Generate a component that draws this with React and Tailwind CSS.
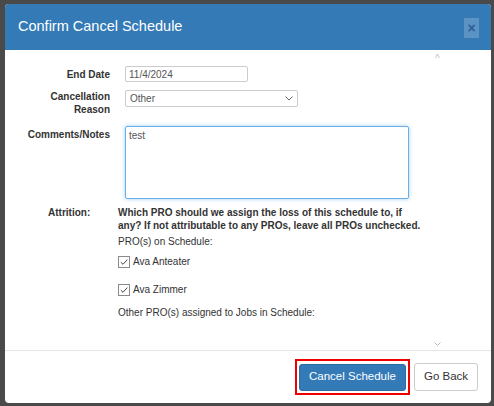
import React from 'react';

const Check = () => (
  <span className="flex h-[12px] w-[12px] items-center justify-center border border-[#8a8a8a] bg-white">
    <svg width="10" height="10" viewBox="0 0 10 10" fill="none">
      <path d="M1.8 5.2 L4 7.3 L8.3 2.6" stroke="#444" strokeWidth="1" />
    </svg>
  </span>
);

const App = () => {
  return (
    <div className="h-[406px] w-[494px] bg-[#4a4a4a] pt-[4px] pl-[5px] font-['Liberation_Sans',Arial,sans-serif]">
      <div className="flex h-[399px] w-[486px] flex-col overflow-hidden rounded-[4px] bg-white">
        {/* header */}
        <div className="flex h-[46px] items-center justify-between bg-[#337ab7] pl-[13px] pr-[12px]">
          <h1 className="text-[14.5px] text-white">Confirm Cancel Schedule</h1>
          <button className="mt-[2px] flex h-[20px] w-[15px] items-center justify-center bg-[#5b93c5] text-[14px] font-bold leading-none text-[#2a5f91]">
            ×
          </button>
        </div>

        {/* body */}
        <div className="relative flex-1 text-[10px] text-[#333]">
          <span className="absolute left-[430px] top-[1px] text-[10px] text-[#bbb]">^</span>
          <div className="flex flex-col pt-[16px]">
            <div className="flex items-center">
              <label className="w-[105px] text-right font-bold">End Date</label>
              <input
                readOnly
                value="11/4/2024"
                className="ml-[15px] h-[16px] w-[123px] rounded-[2px] border border-[#ccc] px-[3px] text-[10px] text-[#555] outline-none"
              />
            </div>
            <div className="mt-[8px] flex items-start">
              <label className="w-[105px] text-right font-bold leading-[13px]">
                Cancellation
                <br />
                Reason
              </label>
              <div className="ml-[15px] flex h-[17px] w-[173px] items-center justify-between rounded-[2px] border border-[#ccc] px-[4px] text-[#555]">
                <span>Other</span>
                <svg width="8" height="5" viewBox="0 0 8 5" fill="none">
                  <path d="M0.5 0.5 L4 4 L7.5 0.5" stroke="#666" strokeWidth="1" />
                </svg>
              </div>
            </div>
            <div className="mt-[10px] flex items-start">
              <label className="mt-[1px] w-[105px] text-right font-bold">Comments/Notes</label>
              <div className="ml-[15px] h-[73px] w-[284px] rounded-[2px] border border-[#66afe9] px-[3px] pt-[1px] text-[#555] shadow-[0_0_4px_rgba(102,175,233,0.6)]">
                test
              </div>
            </div>
            <div className="mt-[7px] flex items-start">
              <label className="w-[113px] pl-[43px] font-bold leading-[13px]">Attrition:</label>
              <div className="flex w-[310px] flex-col">
                <p className="whitespace-nowrap font-bold leading-[13px]">
                  Which PRO should we assign the loss of this schedule to, if
                  <br />
                  any? If not attributable to any PROs, leave all PROs unchecked.
                </p>
                <p className="mt-[4px] leading-[12px]">PRO(s) on Schedule:</p>
                <div className="mt-[6px] flex items-center gap-[3px]">
                  <Check />
                  <span>Ava Anteater</span>
                </div>
                <div className="mt-[13px] flex items-center gap-[3px]">
                  <Check />
                  <span>Ava Zimmer</span>
                </div>
                <p className="mt-[10px] leading-[12px]">Other PRO(s) assigned to Jobs in Schedule:</p>
              </div>
            </div>
          </div>
          <svg className="absolute left-[429px] bottom-[3px]" width="7" height="5" viewBox="0 0 7 5" fill="none">
            <path d="M0.5 0.5 L3.5 3.5 L6.5 0.5" stroke="#bbb" strokeWidth="1" />
          </svg>
        </div>

        {/* footer */}
        <div className="flex h-[53px] items-center justify-end gap-[4px] border-t border-[#e5e5e5] pr-[13px]">
          <div className="border-2 border-[#e00] p-[2px]">
            <button className="h-[27px] w-[107px] rounded-[3px] border border-[#2e6da4] bg-[#337ab7] text-[11.5px] text-white">
              Cancel Schedule
            </button>
          </div>
          <button className="h-[28px] w-[64px] rounded-[3px] border border-[#ccc] bg-white text-[11.5px] text-[#333]">
            Go Back
          </button>
        </div>
      </div>
    </div>
  );
};

export default App;
